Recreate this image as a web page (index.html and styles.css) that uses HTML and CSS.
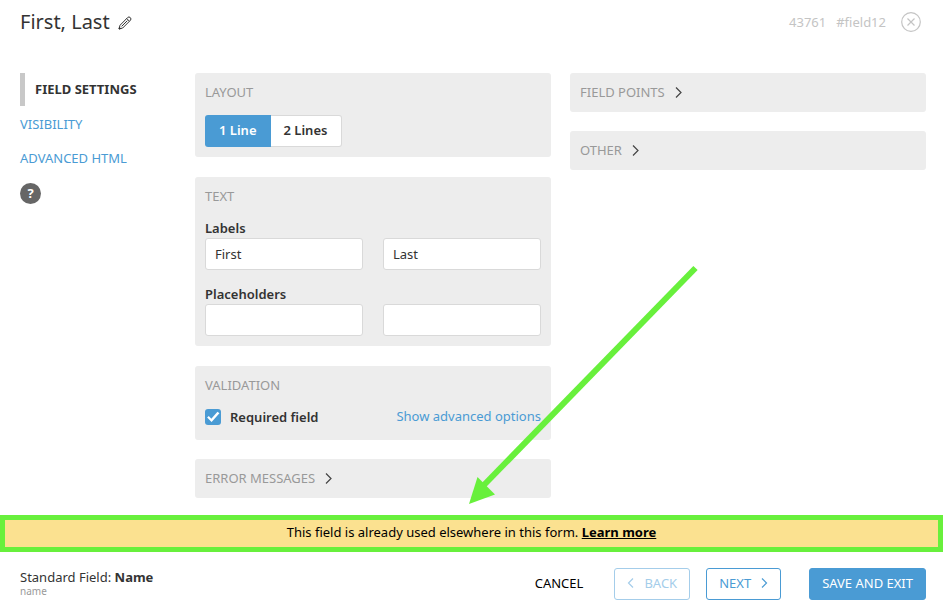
FILE: index.html
```html
<!DOCTYPE html>
<html lang="en">
<head>
    <meta charset="UTF-8">
    <meta name="viewport" content="width=device-width, initial-scale=1.0">
    <title>Field Settings</title>
    <link rel="stylesheet" href="styles.css">
</head>
<body>
    <div class="editor">
        <header class="header">
            <h1>First, Last</h1>
            <button class="icon-btn edit-btn" aria-label="Rename field">
                <svg width="14" height="14" viewBox="0 0 14 14" fill="none" stroke="#333" stroke-linejoin="round">
                    <path d="M1 13L2 9.3L9.6 1.6Q10.9 0.2 12.3 1.6Q13.7 3 12.4 4.3L4.7 12Z"/>
                    <path d="M8.8 2.6L11.3 5.1M9.4 4.6L3.6 10.4"/>
                    <path d="M1 13L1.5 11.3L2.7 12.5Z" fill="#333"/>
                </svg>
            </button>
            <div class="field-ids">
                <span>43761</span>
                <span>#field12</span>
            </div>
            <button class="icon-btn" aria-label="Close">
                <svg width="20" height="20" viewBox="0 0 20 20" fill="none" stroke="#c4c4c4">
                    <circle cx="10" cy="10" r="9.3" stroke-width="1.2"/>
                    <path class="thick" d="M6.5 6.5L13.5 13.5M13.5 6.5L6.5 13.5"/>
                </svg>
            </button>
        </header>

        <main class="content">
            <nav class="sidebar">
                <a class="active" href="#settings">FIELD SETTINGS</a>
                <a href="#visibility">VISIBILITY</a>
                <a href="#html">ADVANCED HTML</a>
                <button class="help-btn" aria-label="Help">?</button>
            </nav>

            <div class="column">
                <section class="panel">
                    <h2>LAYOUT</h2>
                    <div class="toggle">
                        <button class="selected">1 Line</button>
                        <button>2 Lines</button>
                    </div>
                </section>

                <section class="panel">
                    <h2>TEXT</h2>
                    <div class="field-group">
                        <label for="label-first">Labels</label>
                        <div class="inputs">
                            <input type="text" id="label-first" value="First">
                            <input type="text" aria-label="Last label" value="Last">
                        </div>
                    </div>
                    <div class="field-group">
                        <label for="placeholder-first">Placeholders</label>
                        <div class="inputs">
                            <input type="text" id="placeholder-first">
                            <input type="text" aria-label="Last placeholder">
                        </div>
                    </div>
                </section>

                <section class="panel">
                    <h2>VALIDATION</h2>
                    <div class="validation">
                        <input type="checkbox" id="required" checked>
                        <label for="required">Required field</label>
                        <a href="#advanced">Show advanced options</a>
                    </div>
                </section>

                <button class="panel collapsed">
                    ERROR MESSAGES
                    <svg width="8" height="12" viewBox="0 0 8 12"><path class="thick" d="M1 1.5L6 6.5L1 11.5"/></svg>
                </button>
            </div>

            <div class="column">
                <button class="panel collapsed">
                    FIELD POINTS
                    <svg width="8" height="12" viewBox="0 0 8 12"><path class="thick" d="M1 1.5L6 6.5L1 11.5"/></svg>
                </button>
                <button class="panel collapsed">
                    OTHER
                    <svg width="8" height="12" viewBox="0 0 8 12"><path class="thick" d="M1 1.5L6 6.5L1 11.5"/></svg>
                </button>
            </div>
        </main>

        <div class="notice">
            <p>This field is already used elsewhere in this form. <a href="#learn">Learn more</a></p>
            <svg class="arrow" width="230" height="240" viewBox="0 0 230 240">
                <path d="M227.5 4L15 222" fill="none" stroke="#68f03c" stroke-width="6"/>
                <path d="M1 240L9.5 213L27 230.5Z" fill="#68f03c"/>
            </svg>
        </div>

        <footer class="footer">
            <div class="field-type">
                <div>Standard Field: <b>Name</b></div>
                <small>name</small>
            </div>
            <button class="btn cancel-btn">CANCEL</button>
            <button class="btn back-btn" disabled>
                <svg width="8" height="12" viewBox="0 0 8 12"><path class="thick" d="M6 1.5L1.5 6L6 10.5"/></svg>
                BACK
            </button>
            <button class="btn next-btn">
                NEXT
                <svg width="8" height="12" viewBox="0 0 8 12"><path class="thick" d="M2 1.5L6.5 6L2 10.5"/></svg>
            </button>
            <button class="btn save-btn">SAVE AND EXIT</button>
        </footer>
    </div>
</body>
</html>
```
FILE: styles.css
```css
* {
    box-sizing: border-box;
}
body {
    margin: 0;
    background: white;
    color: #333;
    font-family: 'Noto Sans', 'Open Sans', sans-serif;
    font-size: 13px;
    line-height: 18px;
}
button, input {
    font: inherit;
    color: inherit;
}
button {
    cursor: pointer;
}
a {
    color: #4a9bd4;
    text-decoration: none;
}
h1, h2, p {
    margin: 0;
    font-weight: normal;
}
.thick {
    stroke-width: 1.2;
}
.editor {
    display: flex;
    flex-direction: column;
    min-height: 100vh;
}
.header {
    display: flex;
    align-items: center;
    height: 44px;
    padding: 0 22px 0 20px;
}
.header h1 {
    font-size: 20px;
}
.icon-btn {
    display: flex;
    padding: 0;
    border: none;
    background: none;
}
.edit-btn {
    margin: 2px 0 0 8px;
}
.field-ids {
    display: flex;
    gap: 10px;
    margin-left: auto;
    margin-right: 15px;
    color: #c4c4c4;
}
.content {
    display: grid;
    grid-template-columns: 156px 1fr 1fr;
    gap: 19px;
    padding: 29px 17px 17px 20px;
}
.sidebar {
    display: flex;
    flex-direction: column;
    align-items: flex-start;
    gap: 16px;
}
.sidebar .active {
    margin-bottom: -7px;
    padding: 7px 0 8px 10px;
    border-left: 5px solid #c8c8c8;
    color: #333;
    font-weight: bold;
}
.help-btn {
    width: 21px;
    height: 21px;
    padding: 0 0 2px;
    border: none;
    border-radius: 50%;
    background: #666;
    color: white;
    font-weight: bold;
}
.column {
    display: flex;
    flex-direction: column;
    gap: 19px;
}
.panel {
    padding: 10px;
    border: none;
    border-radius: 3px;
    background: #ededed;
}
.panel + .panel:not(.collapsed) {
    margin-top: 1px;
}
.panel h2 {
    margin-bottom: 14px;
    color: #999;
    font-size: 13px;
}
.collapsed {
    display: flex;
    align-items: center;
    gap: 10px;
    height: 39px;
    padding-bottom: 12px;
    color: #999;
}
.collapsed svg {
    fill: none;
    stroke: #444;
}
.toggle {
    display: flex;
}
.toggle button {
    height: 32px;
    padding: 0 14px 2px 13px;
    border: 1px solid #d9d9d9;
    border-left: none;
    border-radius: 0 3px 3px 0;
    background: white;
    font-weight: 600;
}
.toggle .selected {
    padding: 0 14px 2px;
    border: none;
    border-radius: 3px 0 0 3px;
    background: #4a9bd4;
    color: white;
}
.field-group + .field-group {
    margin-top: 15px;
}
label {
    font-weight: 600;
}
.field-group label {
    display: block;
    line-height: 19px;
}
.inputs {
    display: grid;
    grid-template-columns: 1fr 1fr;
    gap: 20px;
}
.inputs input {
    width: 100%;
    height: 32px;
    padding: 0 9px;
    border: 1px solid #d9d9d9;
    border-radius: 3px;
    background: white;
}
.validation {
    display: flex;
    align-items: center;
    padding-bottom: 4px;
}
.validation input {
    appearance: none;
    display: grid;
    place-items: center;
    width: 16px;
    height: 16px;
    margin: 0 9px 0 0;
    border-radius: 3px;
    background: white;
}
.validation input:checked {
    background: #4a9bd4;
}
.validation input:checked::before {
    content: "";
    width: 14px;
    height: 12px;
    background: white;
    clip-path: polygon(8% 54%, 20% 42%, 38% 64%, 82% 6%, 96% 18%, 40% 92%);
}
.validation a {
    margin-left: auto;
    padding-bottom: 2px;
    line-height: 16px;
}
.notice {
    position: relative;
    padding: 3px 5px 6px;
    border: 5px solid #68f03c;
    background: #fbe190;
    color: black;
    text-align: center;
}
.notice a {
    color: black;
    font-weight: bold;
    text-decoration: underline;
}
.arrow {
    position: absolute;
    bottom: 100%;
    left: 50%;
    margin: 0 0 16px -4px;
    pointer-events: none;
}
.footer {
    display: flex;
    align-items: center;
    padding: 16px 17px 16px 20px;
}
.field-type {
    margin-right: auto;
    padding-bottom: 2px;
    line-height: 16px;
}
.field-type small {
    display: block;
    color: #999;
    font-size: 10px;
    line-height: 12px;
}
.btn {
    display: flex;
    align-items: center;
    gap: 9px;
    height: 32px;
    padding: 0 12px 2px;
    border: 1px solid #4a9bd4;
    border-radius: 3px;
    background: white;
    color: #4a9bd4;
}
.btn svg {
    fill: none;
    stroke: currentColor;
}
.cancel-btn {
    margin-right: 18px;
    border-color: transparent;
    color: black;
}
.back-btn {
    border-color: #a4cdea;
    color: #a4cdea;
}
.next-btn {
    margin: 0 28px 0 16px;
}
.save-btn {
    background: #4a9bd4;
    color: white;
}
```
